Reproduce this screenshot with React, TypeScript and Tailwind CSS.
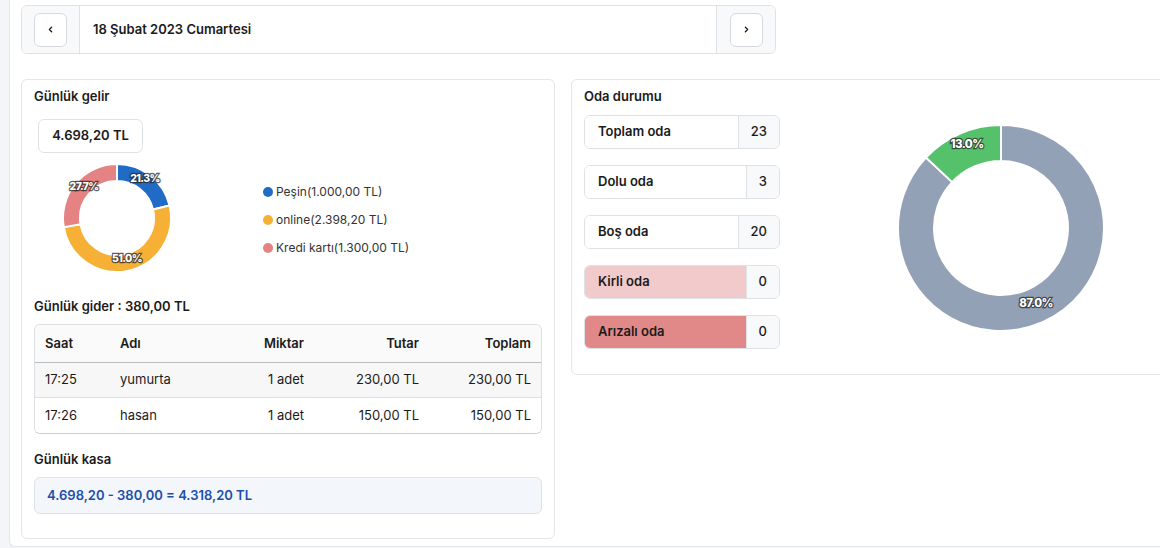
import { ChevronLeft, ChevronRight } from "lucide-react";

type Slice = { value: number; color: string };

const font = { fontFamily: "Inter, 'Open Sans', sans-serif" };

// donut arc path, angles as fraction of a turn from 12 o'clock clockwise
const arcPath = (cx: number, cy: number, r0: number, r1: number, a0: number, a1: number) => {
  const pt = (r: number, a: number) => [
    cx + r * Math.sin(2 * Math.PI * a),
    cy - r * Math.cos(2 * Math.PI * a),
  ];
  const large = a1 - a0 > 0.5 ? 1 : 0;
  const [ox0, oy0] = pt(r1, a0);
  const [ox1, oy1] = pt(r1, a1);
  const [ix1, iy1] = pt(r0, a1);
  const [ix0, iy0] = pt(r0, a0);
  return `M${ox0} ${oy0} A${r1} ${r1} 0 ${large} 1 ${ox1} ${oy1} L${ix1} ${iy1} A${r0} ${r0} 0 ${large} 0 ${ix0} ${iy0} Z`;
};

const Donut = ({
  size,
  inner,
  slices,
  labels,
  fontSize,
}: {
  size: number;
  inner: number;
  slices: Slice[];
  labels: { x: number; y: number; text: string }[];
  fontSize: number;
}) => {
  const c = size / 2;
  const outer = c - 1;
  let acc = 0;
  return (
    <svg width={size} height={size} viewBox={`0 0 ${size} ${size}`}>
      {slices.map((s, i) => {
        const a0 = acc;
        acc += s.value;
        return (
          <path
            key={i}
            d={arcPath(c, c, inner, outer, a0, acc)}
            fill={s.color}
            stroke="#fff"
            strokeWidth={2}
          />
        );
      })}
      {labels.map((l) => (
        <text
          key={l.text}
          x={l.x}
          y={l.y}
          textAnchor="middle"
          dominantBaseline="middle"
          fontSize={fontSize}
          fontWeight={800}
          fill="#fff"
          stroke="rgba(40,40,40,0.75)"
          strokeWidth={2.4}
          paintOrder="stroke"
          letterSpacing={-0.6}
          style={font}
        >
          {l.text}
        </text>
      ))}
    </svg>
  );
};

const legend = [
  { color: "bg-[#1f6bc6]", text: "Peşin(1.000,00 TL)" },
  { color: "bg-[#f6b035]", text: "online(2.398,20 TL)" },
  { color: "bg-[#e58283]", text: "Kredi kartı(1.300,00 TL)" },
];

const expenses = [
  { saat: "17:25", adi: "yumurta", miktar: "1 adet", tutar: "230,00 TL", toplam: "230,00 TL" },
  { saat: "17:26", adi: "hasan", miktar: "1 adet", tutar: "150,00 TL", toplam: "150,00 TL" },
];

const rooms = [
  { label: "Toplam oda", value: "23", bg: "bg-white" },
  { label: "Dolu oda", value: "3", bg: "bg-white" },
  { label: "Boş oda", value: "20", bg: "bg-white" },
  { label: "Kirli oda", value: "0", bg: "bg-[#f1cbcc]" },
  { label: "Arızalı oda", value: "0", bg: "bg-[#e08988]" },
];

const cols = "grid grid-cols-[75px_120px_84px_115px_1fr]";

export default function App() {
  return (
    <div
      className="h-[548px] w-[1160px] overflow-hidden bg-[#f4f5f9] pl-[9px] text-[13px] text-[#1b1b1b]"
      style={font}
    >
      <div className="h-[547px] w-[1220px] rounded-bl-md border-b border-l border-[#e4e6ea] bg-white pl-[11px] pt-[5px]">
        {/* DATE NAV */}
        <div className="flex h-[49px] w-[755px] overflow-hidden rounded-md border border-[#dee2e6]">
          <div className="flex w-[58px] items-center justify-center border-r border-[#dee2e6] bg-[#f8f9fa]">
            <button className="flex h-[34px] w-[33px] items-center justify-center rounded-md border border-[#d6d9dd] bg-white">
              <ChevronLeft size={9} strokeWidth={3.5} />
            </button>
          </div>
          <div className="flex flex-1 items-center pl-[13px] font-semibold">18 Şubat 2023 Cumartesi</div>
          <div className="flex w-[59px] items-center justify-center border-l border-[#dee2e6] bg-[#f8f9fa]">
            <button className="flex h-[34px] w-[33px] items-center justify-center rounded-md border border-[#d6d9dd] bg-white">
              <ChevronRight size={9} strokeWidth={3.5} />
            </button>
          </div>
        </div>

        <div className="mt-[25px] flex items-start gap-[16px]">
          {/* LEFT CARD */}
          <div className="h-[460px] w-[534px] rounded-md border border-[#e4e6ea] px-[12px] pt-[6px]">
            <div className="h-[20px] font-semibold leading-[20px]">Günlük gelir</div>
            <div className="ml-[4px] mt-[13px] flex h-[34px] w-[105px] items-center justify-center rounded-md border border-[#dee2e6] font-semibold">
              4.698,20 TL
            </div>
            <div className="mt-[10px] flex items-center">
              <div className="ml-[28px]">
                <Donut
                  size={110}
                  inner={37}
                  fontSize={10.5}
                  slices={[
                    { value: 0.213, color: "#1f6bc6" },
                    { value: 0.51, color: "#f6b035" },
                    { value: 0.277, color: "#e58283" },
                  ]}
                  labels={[
                    { x: 83, y: 16, text: "21.3%" },
                    { x: 65, y: 96, text: "51.0%" },
                    { x: 22, y: 24, text: "27.7%" },
                  ]}
                />
              </div>
              <div className="ml-[91px] mt-[4px] flex flex-col gap-[10px] text-[12px] text-[#333]">
                {legend.map((l) => (
                  <div key={l.text} className="flex h-[18px] items-center gap-[3px]">
                    <span className={`h-[10px] w-[10px] rounded-full ${l.color}`} />
                    <span>{l.text}</span>
                  </div>
                ))}
              </div>
            </div>

            <div className="mt-[23px] h-[20px] font-semibold leading-[20px]">Günlük gider : 380,00 TL</div>
            <div className="mt-[8px] overflow-hidden rounded-md border border-[#dcdfe3] border-b-[#c9ccd0]">
              <div className={`${cols} h-[38px] items-center border-b border-[#b9bcc0] bg-[#fafafa] font-semibold`}>
                <div className="px-[10px]">Saat</div>
                <div className="px-[10px]">Adı</div>
                <div className="px-[10px] text-right">Miktar</div>
                <div className="px-[10px] text-right">Tutar</div>
                <div className="px-[10px] text-right">Toplam</div>
              </div>
              {expenses.map((e, i) => (
                <div
                  key={e.saat}
                  className={`${cols} h-[35px] items-center ${i === 0 ? "border-b border-[#dcdfe3] bg-[#f7f7f7]" : "bg-white"}`}
                >
                  <div className="px-[10px]">{e.saat}</div>
                  <div className="px-[10px]">{e.adi}</div>
                  <div className="px-[10px] text-right">{e.miktar}</div>
                  <div className="px-[10px] text-right">{e.tutar}</div>
                  <div className="px-[10px] text-right">{e.toplam}</div>
                </div>
              ))}
            </div>

            <div className="mt-[15px] h-[20px] font-semibold leading-[20px]">Günlük kasa</div>
            <div className="mt-[8px] flex h-[37px] items-center rounded-md border border-[#dde3ea] bg-[#f3f6fb] pl-[12px] font-semibold text-[#1c4fac]">
              4.698,20 - 380,00 = 4.318,20 TL
            </div>
          </div>

          {/* RIGHT CARD */}
          <div className="flex h-[296px] w-[640px] items-start rounded-md border border-[#e4e6ea] px-[12px] pt-[6px]">
            <div className="w-[196px]">
              <div className="h-[20px] font-semibold leading-[20px]">Oda durumu</div>
              <div className="mt-[9px] flex flex-col gap-[16px]">
                {rooms.map((r) => (
                  <div key={r.label} className="flex h-[34px] overflow-hidden rounded-md border border-[#dee2e6]">
                    <div className={`flex flex-1 items-center pl-[13px] font-semibold ${r.bg}`}>{r.label}</div>
                    <div className="flex items-center border-l border-[#dee2e6] bg-[#f8f9fa] px-[12px] font-medium">
                      {r.value}
                    </div>
                  </div>
                ))}
              </div>
            </div>
            <div className="ml-[117px] mt-[38px]">
              <Donut
                size={208}
                inner={67}
                fontSize={11.5}
                slices={[
                  { value: 0.87, color: "#93a1b7" },
                  { value: 0.13, color: "#55c16a" },
                ]}
                labels={[
                  { x: 70, y: 21, text: "13.0%" },
                  { x: 139, y: 180, text: "87.0%" },
                ]}
              />
            </div>
          </div>
        </div>
      </div>
    </div>
  );
}
